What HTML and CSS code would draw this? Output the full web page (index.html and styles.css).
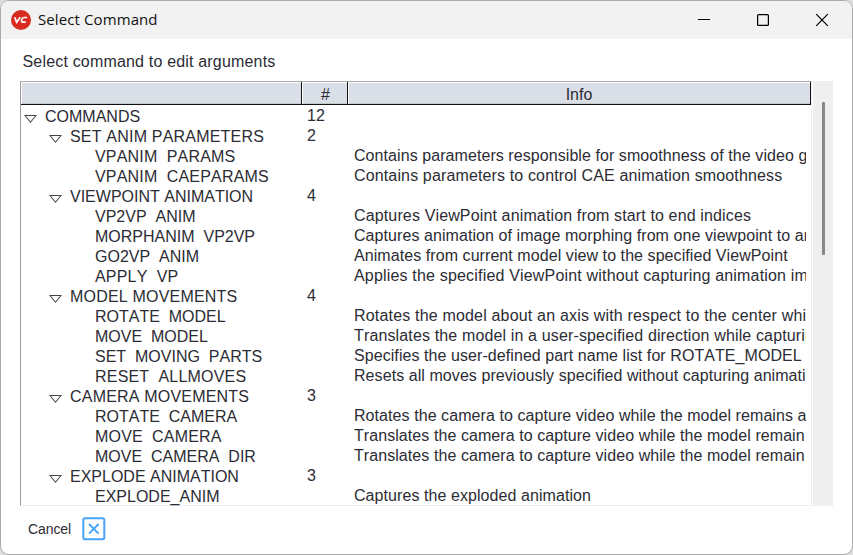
FILE: index.html
```html
<!DOCTYPE html>
<html lang="en">
<head>
<meta charset="utf-8">
<title>Select Command</title>
<link rel="stylesheet" href="styles.css">
</head>
<body>
<div class="window">
  <header class="titlebar">
    <svg class="logo" viewBox="0 0 20 20"><circle cx="10" cy="10" r="10" fill="#d92b20"/><path d="M3.7 7.2 5.6 12.2 9.3 7.2M16.2 7.5H13Q11.2 7.5 10.7 9.6T11.6 12.1H14.8" fill="none" stroke="#fff" stroke-width="1.7"/></svg>
    <h1 class="title">Select Command</h1>
    <div class="controls">
      <svg viewBox="0 0 14 14"><path d="M1 6.5H13" stroke="#000"/></svg>
      <svg viewBox="0 0 14 14"><rect x="1.6" y="1.6" width="10.8" height="10.8" rx="1" fill="none" stroke="#000" stroke-width="1.25"/></svg>
      <svg viewBox="0 0 14 14"><path d="M1.2 1.2 12.8 12.8M12.8 1.2 1.2 12.8" stroke="#000" stroke-width="1.2"/></svg>
    </div>
  </header>
  <main class="content">
    <p class="prompt">Select command to edit arguments</p>
    <div class="list">
      <div class="table">
        <div class="head"><span></span><span class="hash">#</span><span class="infohead">Info</span></div>
        <div class="rows">
          <div class="row root"><b>COMMANDS</b><i>12</i></div>
          <div class="row group"><b class="loose">SET ANIM PARAMETERS</b><i>2</i></div>
          <div class="row"><b class="loose">VPANIM_PARAMS</b><i></i><span>Contains parameters responsible for smoothness of the video g</span></div>
          <div class="row"><b class="loose">VPANIM_CAEPARAMS</b><i></i><span class="wide">Contains parameters to control CAE animation smoothness</span></div>
          <div class="row group"><b>VIEWPOINT ANIMATION</b><i>4</i></div>
          <div class="row"><b>VP2VP_ANIM</b><i></i><span class="wide">Captures ViewPoint animation from start to end indices</span></div>
          <div class="row"><b>MORPHANIM_VP2VP</b><i></i><span>Captures animation of image morphing from one viewpoint to another</span></div>
          <div class="row"><b>GO2VP_ANIM</b><i></i><span>Animates from current model view to the specified ViewPoint</span></div>
          <div class="row"><b class="loose">APPLY_VP</b><i></i><span class="widest">Applies the specified ViewPoint without capturing animation images</span></div>
          <div class="row group"><b class="loose">MODEL MOVEMENTS</b><i>4</i></div>
          <div class="row"><b>ROTATE_MODEL</b><i></i><span class="widest">Rotates the model about an axis with respect to the center while</span></div>
          <div class="row"><b>MOVE_MODEL</b><i></i><span class="wide">Translates the model in a user-specified direction while capturing</span></div>
          <div class="row"><b>SET_MOVING_PARTS</b><i></i><span>Specifies the user-defined part name list for ROTATE_MODEL</span></div>
          <div class="row"><b class="loose">RESET_ALLMOVES</b><i></i><span>Resets all moves previously specified without capturing animation</span></div>
          <div class="row group"><b class="loose">CAMERA MOVEMENTS</b><i>3</i></div>
          <div class="row"><b>ROTATE_CAMERA</b><i></i><span>Rotates the camera to capture video while the model remains at</span></div>
          <div class="row"><b class="loose">MOVE_CAMERA</b><i></i><span>Translates the camera to capture video while the model remain</span></div>
          <div class="row"><b>MOVE_CAMERA_DIR</b><i></i><span>Translates the camera to capture video while the model remain</span></div>
          <div class="row group"><b>EXPLODE ANIMATION</b><i>3</i></div>
          <div class="row last"><b>EXPLODE_ANIM</b><i></i><span>Captures the exploded animation</span></div>
        </div>
      </div>
      <div class="track"><div class="thumb"></div></div>
    </div>
    <footer class="footer">
      <span>Cancel</span>
      <svg class="cancel" viewBox="0 0 24 24"><rect x="1.3" y="1.3" width="21" height="21" rx="1.8" fill="#fff" stroke="#47a3fa" stroke-width="2"/><path d="M7 7 16.6 16.6M16.6 7 7 16.6" stroke="#47a3fa" stroke-width="1.9"/></svg>
    </footer>
  </main>
</div>
</body>
</html>
```
FILE: styles.css
```css
* { box-sizing: border-box; }
body { margin: 0; background: #dedede; font-family: "Liberation Sans", Arial, sans-serif; font-kerning: none; color: #2c2c34; overflow: hidden; }
.window { width: 853px; height: 555px; border: 1px solid #aaa; border-radius: 9px; background: #fff; overflow: hidden; }
.titlebar { height: 38px; background: #f2f2f2; display: flex; align-items: center; padding: 0 23px 0 10px; }
.logo { width: 20px; height: 20px; display: block; margin-top: -1px; }
.title { margin: -2px auto 0 7px; font: 400 15px "Open Sans", sans-serif; letter-spacing: .1px; color: #111; }
.controls { display: flex; gap: 45px; }
.controls svg { width: 14px; height: 14px; display: block; }
.content { padding: 14px 19px 0; }
.prompt { margin: 0 0 10px 2.5px; font-size: 16px; line-height: 18px; letter-spacing: .18px; white-space: nowrap; }
.list { display: flex; height: 425px; }
.table { width: 792px; border: 1px solid #ededed; border-top-color: #aaa; border-left-color: #999; }
.head { display: grid; grid-template: 23px / 281px 46px 1fr; height: 23px; }
.head span { background: #d9dee7; border: solid #111; border-width: 0 1px 1px 0; box-shadow: inset 1px 1px #fff, inset 0 -1px #c3cbc9; text-align: center; font-size: 16px; line-height: 26px; overflow: hidden; }
.head .hash { padding-left: 2px; }
.rows { height: 400px; margin-top: 1px; overflow: hidden; }
.row { display: grid; grid-template-columns: 283px 50px 452px; height: 20px; font-size: 16px; line-height: 20px; white-space: nowrap; }
.row b { font-weight: 400; height: 18px; line-height: 22px; padding-left: 74px; overflow: hidden; }
.row.group b, .row.root b { display: flex; align-items: baseline; padding-left: 28px; }
.row.root b { padding-left: 3px; }
.row .loose { letter-spacing: .2px; }
.row.group b::before, .row.root b::before { content: ""; width: 13px; height: 8px; margin-right: 8px; background: #444; clip-path: polygon(evenodd, 0 0, 100% 0, 50% 100%, 0 0, 2px 1px, 6.5px 6.5px, 11px 1px, 2px 1px); transform: translateY(1px); }
.row.last b { height: 20px; }
.row i { font-style: normal; padding-left: 3px; }
.row span { overflow: hidden; letter-spacing: .07px; }
.row .wide { letter-spacing: .14px; }
.row .widest { letter-spacing: .18px; }
.track { width: 20px; margin-left: 1px; background: #efefef; padding: 21px 0 0 9px; }
.thumb { width: 3px; height: 153px; border-radius: 1px; background: #888; }
.footer { display: flex; align-items: center; padding: 11px 0 0 8px; font-size: 14px; letter-spacing: -.1px; }
.cancel { width: 24px; height: 24px; margin-left: 11px; }
```
